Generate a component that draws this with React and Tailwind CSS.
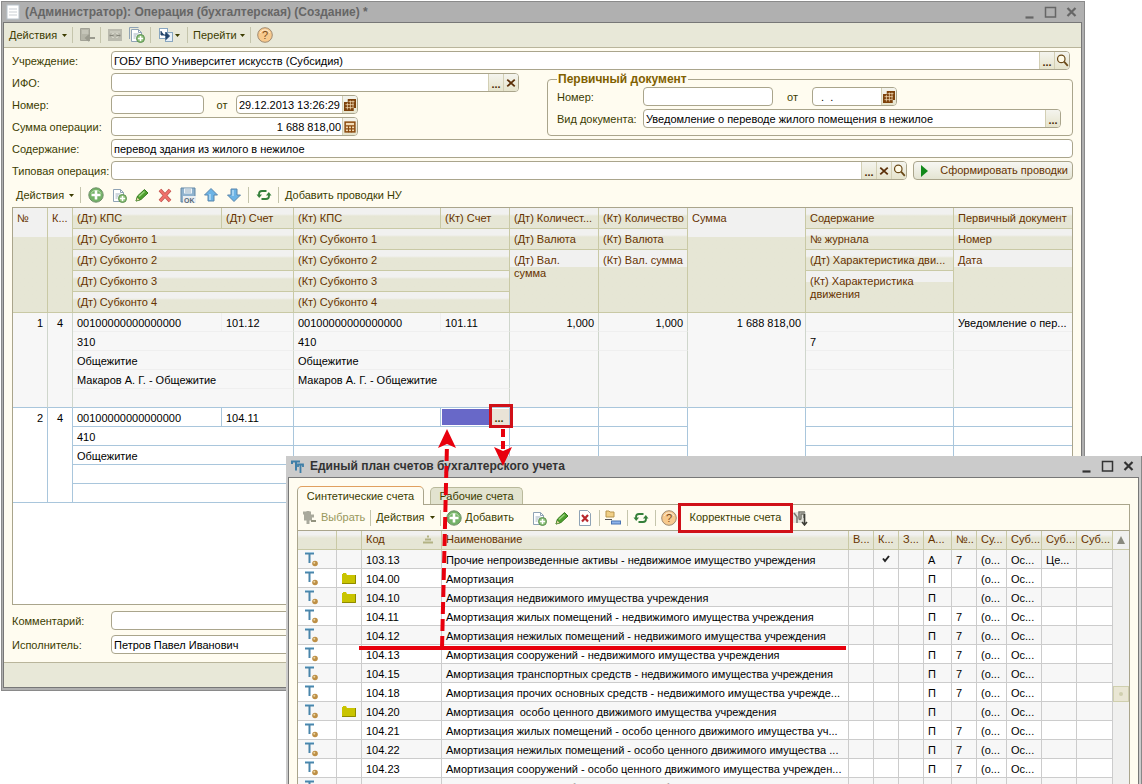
import React, { useState } from 'react';

const Svg = ({ size = 16, children, className = '' }) => (
  <svg width={size} height={size} viewBox="0 0 16 16" fill="none" className={`shrink-0 ${className}`} aria-hidden="true">
    {children}
  </svg>
);

const DocIcon = () => (
  <Svg>
    <rect x="2" y="1" width="12" height="14" fill="#fff" stroke="#b9c3cc" />
    <path d="M4 5h8M4 8h8M4 11h8" stroke="#c9ced3" />
  </Svg>
);

const DocPlusIcon = ({ copy }) => (
  <Svg>
    {copy && <path d="M.5 12V.5h9" stroke="#8fa3b5" />}
    <path d="M2.500 2.500h7l3 3v9h-10z" fill="#fff" stroke="#8fa3b5" />
    <path d="M9.500 2.500v3h3" stroke="#8fa3b5" />
    <path d="M4.500 7h5M4.500 9h3M4.500 11h2" stroke="#9fb0be" />
    <circle cx="11.500" cy="11.500" r="4" fill="#8fc27b" stroke="#5b8f50" />
    <path d="M11.500 9v5M9 11.500h5" stroke="#fff" strokeWidth="1.500" />
  </Svg>
);

const PlusIcon = () => (
  <Svg>
    <circle cx="8" cy="8" r="7.200" fill="#73b267" stroke="#6f8f6a" />
    <path d="M3 6.500a5.500 5.500 0 0 1 10 0" stroke="#b6dcaa" />
    <path d="M8 3.500v9M3.500 8h9" stroke="#fff" strokeWidth="2.600" />
  </Svg>
);

const PencilIcon = () => (
  <Svg>
    <path d="M2 14l1.500-5 7-6.500L14 6l-7 6.500z" fill="#4fa02f" stroke="#357a1f" />
    <path d="M5 9.500l5.500-5" stroke="#9bd47e" strokeWidth="1.500" />
    <path d="M2 14l1.300-3.800L6 13z" fill="#e9d9a6" stroke="#357a1f" strokeWidth=".5" />
  </Svg>
);

const DeleteIcon = () => (
  <Svg>
    <path d="M3 3l10 11M13 3L3 14" stroke="#b8544e" strokeWidth="3.600" />
    <path d="M3 3l10 11M13 3L3 14" stroke="#f0706a" strokeWidth="2.400" />
  </Svg>
);

const SaveIcon = () => (
  <Svg>
    <path d="M1 1h14v14H1z" fill="#8fb2ce" stroke="#6287a5" />
    <path d="M4 1.500h8v5H4z" fill="#eef4f8" />
    <path d="M5 3h6M5 5h6" stroke="#9db3c4" />
    <path d="M3 9h13v7H3z" fill="#e9eef2" />
    <text x="4" y="15.500" fontSize="7" fontWeight="700" fontFamily="Liberation Sans, sans-serif" fill="#5a6a77">
      OK
    </text>
  </Svg>
);

const ArrowIcon = ({ down }) => (
  <Svg>
    <path
      d={down ? 'M5 2h6v6h3.500L8 14.500 1.500 8H5z' : 'M5 14h6V8h3.500L8 1.500 1.500 8H5z'}
      fill="#6db4e6"
      stroke="#5a86ac"
    />
    <path d={down ? 'M7 3v6' : 'M7 13V7'} stroke="#b8def6" strokeWidth="1.500" />
  </Svg>
);

const RefreshIcon = () => (
  <Svg>
    <path d="M3 8.500V7a3 3 0 0 1 3-3h4.500" stroke="#35803b" strokeWidth="1.800" />
    <path d="M13 7.500V9a3 3 0 0 1-3 3H5.500" stroke="#35803b" strokeWidth="1.800" />
    <path d="M.5 7.500h5.500L3.200 11z" fill="#35803b" />
    <path d="M10 8.500h5.500L12.800 5z" fill="#35803b" />
  </Svg>
);

const HelpIcon = () => (
  <Svg>
    <circle cx="8" cy="8" r="7.300" fill="#f7c98d" stroke="#a08a70" />
    <path d="M3 6a5.500 5.500 0 0 1 10 0" stroke="#fde9cc" />
    <text x="8" y="12" fontSize="11" textAnchor="middle" fontFamily="Liberation Sans, sans-serif" fill="#7a4a1c">
      ?
    </text>
  </Svg>
);

const PostIcon = () => (
  <Svg>
    <path d="M1.500 1.500h9v12h-9z" fill="#b5b5a8" stroke="#a2a296" />
    <path d="M3 4h6M3 6h6" stroke="#d4d4c8" />
    <path d="M16 11H8M10.500 8L7 11l3.500 3" stroke="#9a9a8e" strokeWidth="2" />
  </Svg>
);

const BasedOnIcon = () => (
  <Svg>
    <rect x="1.500" y="1.500" width="8" height="10" fill="#fff" stroke="#88a6c0" />
    <rect x="7.500" y="5.500" width="7" height="9" fill="#e7f0f8" stroke="#88a6c0" />
    <path d="M3 4v4h5V5.500L11.500 9 8 12.500V10" fill="#22446b" stroke="#22446b" />
  </Svg>
);

const ReloadDisabledIcon = () => (
  <Svg>
    <rect x="1" y="2" width="14" height="12" fill="#babaae" />
    <path d="M3 5h10" stroke="#d6d6ca" />
    <path d="M6.500 6L4 8.500 6.500 11M9.500 6L12 8.500 9.500 11" stroke="#efefe3" />
    <path d="M2.500 8.500h4M9.500 8.500h4" stroke="#86867b" strokeWidth="1.500" />
  </Svg>
);

const CalendarIcon = () => (
  <Svg size={12}>
    <path d="M5 0h11v12h-3v4H0V4h5z" fill="#7d420c" />
    <path d="M2 7.500h11M2 11.500h11M6 3.500h8M4.500 5v9M8.500 2v12M12 2v9" stroke="#f3dcb7" />
  </Svg>
);

const CalcIcon = () => (
  <Svg size={12}>
    <rect x="1.500" y="1.500" width="13" height="13" fill="#f3dcb7" stroke="#8b4a0e" strokeWidth="2" />
    <path d="M2 6.500h12M2 10.500h12M6 6v9M10 6v9" stroke="#8b4a0e" strokeWidth="1.500" />
  </Svg>
);

const SearchIcon = () => (
  <Svg size={13}>
    <circle cx="6.500" cy="6" r="4.600" fill="#fffbe8" stroke="#6b4a18" strokeWidth="1.500" />
    <path d="M10 9.500l4.500 5" stroke="#6b4a18" strokeWidth="2.200" />
  </Svg>
);

const ClearIcon = () => (
  <Svg size={12}>
    <path d="M3 3.500l10 9M13 3.500l-10 9" stroke="#5b2f08" strokeWidth="2.400" />
  </Svg>
);

const DocXIcon = () => (
  <Svg>
    <path d="M2.500 .5h8l3 3v12h-11z" fill="#fff" stroke="#8fa3b5" />
    <path d="M5 5l6 6.500M11 5l-6 6.500" stroke="#b8282e" strokeWidth="2.200" />
  </Svg>
);

const HierarchyIcon = () => (
  <Svg>
    <path d="M1 1h3l1 1h4v5H1z" fill="#f0cf86" stroke="#b8954c" />
    <path d="M0 9.500h7" stroke="#555" />
    <rect x="6.500" y="11" width="9" height="3" fill="#8fb4ea" stroke="#4a74b4" />
  </Svg>
);

const FilterIcon = () => (
  <Svg>
    <path d="M0 2h13v11H0z" fill="#e3e3dc" />
    <path d="M1 3l3 4v6M12 2H6v6c0 2 2 2 2 0V4h3v4" stroke="#77776d" strokeWidth="1.500" />
    <path d="M11.500 4v10M9 12l2.500 3 2.500-3" stroke="#3d3d36" strokeWidth="1.500" />
  </Svg>
);

const PickIcon = () => (
  <Svg>
    <path d="M6 1v13M1 3h8M2 6h10M2 9h8" stroke="#a9a99c" strokeWidth="3" />
    <path d="M9 11h5" stroke="#93937f" strokeWidth="2" />
  </Svg>
);

const AccountIcon = () => (
  <Svg>
    <path d="M1 2.500h9M5.500 2.500v9.500" stroke="#4a86ab" strokeWidth="2" />
    <path d="M1 1.500h9" stroke="#9ec5dc" />
    <circle cx="11" cy="12.500" r="2.800" fill="#bd8f45" />
    <circle cx="10.300" cy="11.800" r="1" fill="#ecd7a5" />
  </Svg>
);

const ChartIcon = () => (
  <Svg>
    <path d="M2 5V2.500h8M6 2.500v9" stroke="#3f7fa8" strokeWidth="2" />
    <path d="M8 8V5.500h5V8M10.500 5.500V14" stroke="#3f7fa8" strokeWidth="1.800" />
  </Svg>
);

const FolderIcon = () => (
  <svg width="14" height="11" viewBox="0 0 14 11" aria-hidden="true" className="block">
    <path d="M0 1h1V0h3l1 2h9v9H0z" fill="#c9c400" />
    <path d="M13.500 2v8.500H0" stroke="#8e8a00" fill="none" />
  </svg>
);

const SortIcon = () => (
  <svg width="12" height="9" viewBox="0 0 12 9" aria-hidden="true" className="shrink-0">
    <path d="M5 1.500h2M3 4.500h6M1 7.500h10" stroke="#b2b283" strokeWidth="2" />
  </svg>
);

const CheckIcon = () => (
  <svg width="8" height="8" viewBox="0 0 8 8" aria-hidden="true" className="mx-auto block">
    <path d="M1 3.500l2 2.500 4-5" stroke="#222" strokeWidth="2" fill="none" />
  </svg>
);

const Caret = () => (
  <svg width="5" height="3" viewBox="0 0 5 3" aria-hidden="true" className="shrink-0">
    <path d="M0 0h5L2.500 3z" fill="#3c3c00" />
  </svg>
);

const Sep = () => <span className="h-4 w-px shrink-0 bg-[#c5c5ac]" />;

const Tool = ({ label, children }) => (
  <button type="button" aria-label={label} className="flex h-5 w-[17px] shrink-0 items-center justify-center">
    {children}
  </button>
);

const MenuButton = ({ children, className = '' }) => (
  <button type="button" className={`flex shrink-0 items-center justify-between whitespace-nowrap ${className}`}>
    {children}
    <Caret />
  </button>
);

const WindowButtons = () => (
  <div className="flex items-center gap-2">
    {[
      { id: 'Свернуть', d: 'M2 11.500h8' },
      { id: 'Развернуть', d: 'M1 1.500h10v9.500H1z' },
      { id: 'Закрыть', d: 'M2 2l8 8M10 2l-8 8' },
    ].map(({ id, d }) => (
      <button key={id} type="button" aria-label={id}>
        <svg width="13" height="13" viewBox="0 0 12 13" fill="none" stroke="currentColor" aria-hidden="true">
          <path d={d} strokeWidth={id === 'Развернуть' ? 1.5 : 2.2} />
        </svg>
      </button>
    ))}
  </div>
);

const actionIcons = {
  pick: { label: 'Выбрать', icon: <span className="pt-[3px] font-bold text-[#4a2c08]">...</span> },
  clear: { label: 'Очистить', icon: <ClearIcon /> },
  open: { label: 'Открыть', icon: <SearchIcon /> },
  calendar: { label: 'Календарь', icon: <CalendarIcon /> },
  calc: { label: 'Калькулятор', icon: <CalcIcon /> },
};

const Field = ({ id, label, value = '', actions = [], right, className = '' }) => {
  const [text, setText] = useState(value);

  return (
    <div className={`flex h-[19px] min-w-0 overflow-hidden rounded-[4px] border border-[#aaa58c] bg-white ${className}`}>
      <input
        id={id}
        type="text"
        aria-label={label}
        value={text}
        onChange={(e) => setText(e.target.value)}
        className={`min-w-0 flex-1 bg-transparent pl-[2px] pr-px pt-px text-black outline-none ${right ? 'text-right' : ''}`}
      />
      {actions.map((name) => (
        <button
          key={name}
          type="button"
          aria-label={actionIcons[name].label}
          className="flex w-[15px] shrink-0 items-center justify-center border-l border-[#d3cfb4] bg-linear-to-b from-[#f4f4ee] to-[#e6e4cc]"
        >
          {actionIcons[name].icon}
        </button>
      ))}
    </div>
  );
};

const Label = ({ htmlFor, children, className = 'w-[99px]' }) => (
  <label htmlFor={htmlFor} className={`shrink-0 whitespace-nowrap pt-px ${className}`}>
    {children}
  </label>
);

const Head = ({ children, tall, className = '', ...rest }) => (
  <th
    {...rest}
    className={`overflow-hidden border-b border-r border-[#c9c9a5] bg-linear-to-b from-[#f1f1f0] to-[#e6e6d5] px-1 pb-[3px] pt-1 text-left align-top font-normal text-[#663300] last:border-r-0 ${
      tall ? 'from-28% to-28%' : 'whitespace-nowrap from-30% to-40%'
    } ${className}`}
  >
    {children}
  </th>
);

// one accounting entry takes five sub-rows of the table
const Entry = ({ num, debit, credit, quantity, sum, journal, doc, editing }) => {
  const line = editing ? 'border-[#a9c6dc]' : 'border-b-[#efefef] border-r-[#cfd6cc]';
  const soft = editing ? 'border-[#a9c6dc]' : 'border-[#efefef]';
  const end = editing ? 'border-[#a9c6dc]' : 'border-b-[#a9c6dc] border-r-[#cfd6cc]';
  const base = 'h-[19px] overflow-hidden whitespace-nowrap border-b border-r px-1 pb-px pt-1 align-top';
  const bg = editing ? 'bg-white' : 'bg-[#f7f7f7]';

  return (
    <tbody className={`text-black ${bg}`}>
      <tr>
        <td rowSpan={5} className={`${base} ${end} text-right`}>{num}</td>
        <td rowSpan={5} className={`${base} ${end} text-center`}>4</td>
        <td className={`${base} ${soft}`}>{debit.kps}</td>
        <td className={`${base} ${line}`}>{debit.account}</td>
        <td className={`${base} ${soft}`}>{credit.kps}</td>
        {editing ? (
          <td className={`h-[19px] border-b border-r p-0 ${line}`}>
            <div className="flex h-[18px] items-center pl-px">
              <input aria-label="(Кт) Счет" type="text" className="h-4 min-w-0 flex-1 bg-[#6868c8] px-1 text-white outline-none" />
              <button type="button" aria-label="Выбрать счет" className="h-[17px] w-5 bg-[#e9e3d6] pt-[2px] font-bold text-[#3c3c00]">
                ...
              </button>
            </div>
          </td>
        ) : (
          <td className={`${base} ${line}`}>{credit.account}</td>
        )}
        <td className={`${base} ${line} text-right`}>{quantity}</td>
        <td className={`${base} ${line} text-right`}>{quantity}</td>
        <td rowSpan={5} className={`${base} ${end} text-right`}>{sum}</td>
        <td className={`${base} ${line}`} />
        <td className={`${base} ${line} border-r-0`}>{doc}</td>
      </tr>
      <tr>
        <td colSpan={2} className={`${base} ${line}`}>{debit.items[0]}</td>
        <td colSpan={2} className={`${base} ${line}`}>{credit.items[0]}</td>
        <td className={`${base} ${line}`} />
        <td className={`${base} ${line}`} />
        <td className={`${base} ${line}`}>{journal}</td>
        <td className={`${base} ${line} border-r-0`} />
      </tr>
      <tr>
        <td colSpan={2} className={`${base} ${line}`}>{debit.items[1]}</td>
        <td colSpan={2} className={`${base} ${line}`}>{credit.items[1]}</td>
        <td rowSpan={3} className={`${base} ${end}`} />
        <td rowSpan={3} className={`${base} ${end}`} />
        <td className={`${base} ${line}`} />
        <td rowSpan={3} className={`${base} ${end} border-r-0`} />
      </tr>
      <tr>
        <td colSpan={2} className={`${base} ${line}`}>{debit.items[2]}</td>
        <td colSpan={2} className={`${base} ${line}`}>{credit.items[2]}</td>
        <td rowSpan={2} className={`${base} ${end}`} />
      </tr>
      <tr>
        <td colSpan={2} className={`${base} ${end}`} />
        <td colSpan={2} className={`${base} ${end}`} />
      </tr>
    </tbody>
  );
};

const EntriesTable = () => (
  <table className="w-full table-fixed border-separate border-spacing-0">
    <colgroup>
      <col className="w-[35px]" />
      <col className="w-[25px]" />
      <col className="w-[149px]" />
      <col className="w-[72px]" />
      <col className="w-[147px]" />
      <col className="w-[69px]" />
      <col className="w-[89px]" />
      <col className="w-[89px]" />
      <col className="w-[118px]" />
      <col className="w-[148px]" />
      <col />
    </colgroup>
    <thead>
      <tr>
        <Head rowSpan={5} tall>№</Head>
        <Head rowSpan={5} tall>К...</Head>
        <Head>(Дт) КПС</Head>
        <Head>(Дт) Счет</Head>
        <Head>(Кт) КПС</Head>
        <Head>(Кт) Счет</Head>
        <Head>(Дт) Количест...</Head>
        <Head>(Кт) Количество</Head>
        <Head rowSpan={5} tall>Сумма</Head>
        <Head>Содержание</Head>
        <Head>Первичный документ</Head>
      </tr>
      <tr>
        <Head colSpan={2}>(Дт) Субконто 1</Head>
        <Head colSpan={2}>(Кт) Субконто 1</Head>
        <Head>(Дт) Валюта</Head>
        <Head>(Кт) Валюта</Head>
        <Head>№ журнала</Head>
        <Head>Номер</Head>
      </tr>
      <tr>
        <Head colSpan={2}>(Дт) Субконто 2</Head>
        <Head colSpan={2}>(Кт) Субконто 2</Head>
        <Head rowSpan={3} tall>
          (Дт) Вал.
          <br />
          сумма
        </Head>
        <Head rowSpan={3} tall className="whitespace-nowrap">(Кт) Вал. сумма</Head>
        <Head>(Дт) Характеристика дви...</Head>
        <Head rowSpan={3} tall>Дата</Head>
      </tr>
      <tr>
        <Head colSpan={2}>(Дт) Субконто 3</Head>
        <Head colSpan={2}>(Кт) Субконто 3</Head>
        <Head rowSpan={2} tall className="border-r!">(Кт) Характеристика движения</Head>
      </tr>
      <tr>
        <Head colSpan={2}>(Дт) Субконто 4</Head>
        <Head colSpan={2} className="border-r!">(Кт) Субконто 4</Head>
      </tr>
    </thead>
    <Entry
      num={1}
      debit={{ kps: '00100000000000000', account: '101.12', items: ['310', 'Общежитие', 'Макаров А. Г. - Общежитие'] }}
      credit={{ kps: '00100000000000000', account: '101.11', items: ['410', 'Общежитие', 'Макаров А. Г. - Общежитие'] }}
      quantity="1,000"
      sum="1 688 818,00"
      journal="7"
      doc="Уведомление о пер..."
    />
    <Entry
      num={2}
      debit={{ kps: '00100000000000000', account: '104.11', items: ['410', 'Общежитие'] }}
      credit={{ items: [] }}
      editing
    />
  </table>
);

const OperationWindow = () => (
  <section className="absolute left-px right-[57px] top-px border border-[#8a8a8a] bg-[#b0b0b0] pb-[2px] pl-px pr-[2px]">
    <header className="flex h-5 items-center justify-between pl-[2px] pr-1 text-[#666]">
      <div className="flex items-center gap-1">
        <DocIcon />
        <h1 className="text-[12px] font-bold">(Администратор): Операция (бухгалтерская) (Создание) *</h1>
      </div>
      <WindowButtons />
    </header>

    <div className="border border-[#777] bg-[#fffcf0]">
      <div className="flex h-[25px] items-center gap-[5px] border-b border-[#b9b59b] bg-[#e8e8d8] pl-[5px]">
        <MenuButton className="w-[58px]">Действия</MenuButton>
        <Sep />
        <Tool label="Провести"><PostIcon /></Tool>
        <Sep />
        <Tool label="Перечитать"><ReloadDisabledIcon /></Tool>
        <Tool label="Скопировать"><DocPlusIcon copy /></Tool>
        <Sep />
        <button type="button" aria-label="Ввести на основании" className="flex items-center gap-px px-[2px]">
          <BasedOnIcon />
          <Caret />
        </button>
        <Sep />
        <MenuButton className="w-[52px]">Перейти</MenuButton>
        <Sep />
        <Tool label="Справка"><HelpIcon /></Tool>
      </div>

      <div className="px-2 pb-2 pt-[3px]">
        <div className="flex flex-col gap-[3px]">
          <div className="flex items-center pr-[3px]">
            <Label htmlFor="org">Учреждение:</Label>
            <Field id="org" value="ГОБУ ВПО Университет искусств (Субсидия)" actions={['pick', 'open']} className="flex-1" />
          </div>

          <div className="flex gap-7">
            <div className="flex w-[507px] shrink-0 flex-col gap-[3px]">
              <div className="flex items-center">
                <Label htmlFor="ifo">ИФО:</Label>
                <Field id="ifo" actions={['pick', 'clear']} className="flex-1" />
              </div>
              <div className="flex items-center">
                <Label htmlFor="number">Номер:</Label>
                <Field id="number" className="w-[93px]" />
                <Label htmlFor="date" className="w-8 pl-1 text-center">от</Label>
                <Field id="date" value="29.12.2013 13:26:29" actions={['calendar']} className="w-[122px]" />
              </div>
              <div className="flex items-center">
                <Label htmlFor="total">Сумма операции:</Label>
                <Field id="total" value="1 688 818,00" actions={['calc']} right className="w-[247px]" />
              </div>
            </div>

            <fieldset className="min-w-0 flex-1 rounded-[4px] border border-[#aaa58c] pl-[9px] pr-[11px]">
              <legend className="px-px text-[12px] font-bold leading-[13px] text-[#806000]">Первичный документ</legend>
              <div className="flex flex-col gap-[3px] pt-px">
                <div className="flex items-center">
                  <Label htmlFor="doc-number" className="w-[86px]">Номер:</Label>
                  <Field id="doc-number" className="w-[130px]" />
                  <Label htmlFor="doc-date" className="w-[39px] text-center">от</Label>
                  <Field id="doc-date" value="  .  ." actions={['calendar']} className="w-[85px]" />
                </div>
                <div className="flex items-center">
                  <Label htmlFor="doc-kind" className="w-[86px]">Вид документа:</Label>
                  <Field
                    id="doc-kind"
                    value="Уведомление о переводе жилого помещения в нежилое"
                    actions={['pick']}
                    className="flex-1"
                  />
                </div>
              </div>
            </fieldset>
          </div>

          <div className="flex items-center">
            <Label htmlFor="content">Содержание:</Label>
            <Field id="content" value="перевод здания из жилого в нежилое" className="flex-1" />
          </div>

          <div className="flex items-center">
            <Label htmlFor="typical">Типовая операция:</Label>
            <Field id="typical" actions={['pick', 'clear', 'open']} className="flex-1" />
            <button
              type="button"
              className="ml-[6px] flex h-[19px] w-40 items-center justify-between rounded-[4px] border border-[#aaa58c] bg-linear-to-b from-[#f7f7f3] to-[#e4e4d2] pl-[6px] pr-1 text-[#663300]"
            >
              <svg width="9" height="12" viewBox="0 0 9 12" aria-hidden="true">
                <path d="M1 0l7 6-7 6z" fill="#12891b" />
              </svg>
              Сформировать проводки
            </button>
          </div>
        </div>

        <div className="flex h-[27px] items-center gap-[6px] pl-1 pt-[3px]">
          <MenuButton className="w-[58px]">Действия</MenuButton>
          <Sep />
          <Tool label="Добавить"><PlusIcon /></Tool>
          <Tool label="Добавить копированием"><DocPlusIcon /></Tool>
          <Tool label="Изменить"><PencilIcon /></Tool>
          <Tool label="Удалить"><DeleteIcon /></Tool>
          <Tool label="Закончить редактирование"><SaveIcon /></Tool>
          <Tool label="Переместить вверх"><ArrowIcon /></Tool>
          <Tool label="Переместить вниз"><ArrowIcon down /></Tool>
          <Sep />
          <Tool label="Обновить"><RefreshIcon /></Tool>
          <Sep />
          <button type="button">Добавить проводки НУ</button>
        </div>

        <div className="min-h-[398px] border border-[#aaa58c] bg-white">
          <EntriesTable />
        </div>

        <div className="mt-[6px] flex flex-col gap-[5px]">
          <div className="flex items-center">
            <Label htmlFor="comment">Комментарий:</Label>
            <Field id="comment" className="flex-1" />
          </div>
          <div className="flex items-center">
            <Label htmlFor="author">Исполнитель:</Label>
            <Field id="author" value="Петров Павел Иванович" className="flex-1" />
          </div>
        </div>
      </div>

      <footer className="h-[25px] border-t border-[#b9b59b] bg-[#e8e8d8]" />
    </div>
  </section>
);

const accounts = [
  { code: '103.13', name: 'Прочие непроизведенные активы - недвижимое имущество учреждения', checked: true, kind: 'А', journal: '7', sub: 'Це...' },
  { code: '104.00', name: 'Амортизация', folder: true },
  { code: '104.10', name: 'Амортизация недвижимого имущества учреждения', folder: true },
  { code: '104.11', name: 'Амортизация жилых помещений - недвижимого имущества учреждения', journal: '7' },
  { code: '104.12', name: 'Амортизация нежилых помещений - недвижимого имущества учреждения', journal: '7' },
  { code: '104.13', name: 'Амортизация сооружений - недвижимого имущества учреждения', journal: '7' },
  { code: '104.15', name: 'Амортизация транспортных средств - недвижимого имущества учреждения', journal: '7' },
  { code: '104.18', name: 'Амортизация прочих основных средств - недвижимого имущества учрежде...', journal: '7' },
  { code: '104.20', name: 'Амортизация  особо ценного движимого имущества учреждения', folder: true },
  { code: '104.21', name: 'Амортизация жилых помещений - особо ценного движимого имущества уч...', journal: '7' },
  { code: '104.22', name: 'Амортизация нежилых помещений - особо ценного движимого имущества ...', journal: '7' },
  { code: '104.23', name: 'Амортизация сооружений - особо ценного движимого имущества учрежден...', journal: '7' },
  { code: '104.24', name: 'Амортизация машин и оборудования - особо ценного движимого имущест...', journal: '7' },
];

const AccountsTable = () => {
  const th =
    'h-[19px] overflow-hidden whitespace-nowrap border-b border-r border-[#c9c9a5] bg-linear-to-b from-[#f1f1f0] from-20% to-[#e6e6d5] to-40% px-1 pb-[3px] pt-[2px] text-left align-top font-normal text-[#663300]';
  const td = 'h-[19px] overflow-hidden whitespace-pre border-b border-r border-[#cccccc] px-1 pb-px pt-1 align-top';

  return (
    <table className="w-full table-fixed border-separate border-spacing-0">
      <colgroup>
        <col className="w-[39px]" />
        <col className="w-[25px]" />
        <col className="w-[80px]" />
        <col />
        <col className="w-[25px]" />
        <col className="w-[25px]" />
        <col className="w-[25px]" />
        <col className="w-[28px]" />
        <col className="w-[25px]" />
        <col className="w-[30px]" />
        <col className="w-[35px]" />
        <col className="w-[35px]" />
        <col className="w-[36px]" />
      </colgroup>
      <thead>
        <tr>
          <th className={th} />
          <th className={th} />
          <th className={th}>
            <div className="flex items-center justify-between pr-[3px]">
              Код
              <SortIcon />
            </div>
          </th>
          {['Наименование', 'В...', 'К...', 'З...', 'А...', '№..', 'Су...', 'Суб...', 'Суб...', 'Суб...'].map((title, i) => (
            <th key={i} className={th}>{title}</th>
          ))}
        </tr>
      </thead>
      <tbody className="text-black">
        {accounts.map((acc) => (
          <tr key={acc.code} className="odd:bg-[#f7f7f7] even:bg-white">
            <td className="h-[19px] border-b border-r border-[#cccccc] py-0 pl-[6px]"><AccountIcon /></td>
            <td className="h-[19px] border-b border-r border-[#cccccc] py-0 pl-[5px]">{acc.folder && <FolderIcon />}</td>
            <td className={td}>{acc.code}</td>
            <td className={td}>{acc.name}</td>
            <td className={td} />
            <td className="h-[19px] border-b border-r border-[#cccccc] px-2 py-0">{acc.checked && <CheckIcon />}</td>
            <td className={td} />
            <td className={td}>{acc.kind || 'П'}</td>
            <td className={td}>{acc.journal}</td>
            <td className={td}>(о...</td>
            <td className={td}>Ос...</td>
            <td className={td}>{acc.sub}</td>
            <td className={td} />
          </tr>
        ))}
      </tbody>
    </table>
  );
};

const AccountsWindow = () => (
  <section className="absolute left-[286px] right-0 top-[456px] border-r border-[#888] bg-[#cbcbcb] pl-[2px] pr-[2px]">
    <header className="flex h-[21px] items-center justify-between pl-[2px] pr-1 text-[#333]">
      <div className="flex items-center gap-1">
        <ChartIcon />
        <h2 className="text-[12px] font-bold">Единый план счетов бухгалтерского учета</h2>
      </div>
      <WindowButtons />
    </header>

    <div className="border border-[#777] bg-[#fffcf0] px-2 pt-2">
      <div role="tablist" className="flex items-end gap-[6px]">
        <button
          type="button"
          role="tab"
          aria-selected="true"
          className="-mb-px h-[19px] w-[127px] rounded-t-[5px] border border-b-0 border-[#aaa58c] border-t-[#e0a060] bg-[#fffcf0] leading-[17px]"
        >
          Синтетические счета
        </button>
        <button
          type="button"
          role="tab"
          aria-selected="false"
          className="h-[17px] w-[93px] rounded-t-[5px] border border-b-0 border-[#b9b99b] bg-[#e2e3cf] leading-[16px]"
        >
          Рабочие счета
        </button>
      </div>

      <div className="border border-[#aaa58c]">
        <div className="flex h-[26px] items-center gap-[5px] border-b border-[#aaa58c] pl-1">
          <button type="button" disabled className="flex items-center gap-[3px] text-[#98985c]">
            <PickIcon />
            Выбрать
          </button>
          <Sep />
          <MenuButton className="w-[59px]">Действия</MenuButton>
          <Sep />
          <button type="button" className="flex items-center gap-[3px]">
            <PlusIcon />
            Добавить
          </button>
          <div className="flex items-center gap-[6px] pl-3">
            <Tool label="Добавить копированием"><DocPlusIcon /></Tool>
            <Tool label="Изменить"><PencilIcon /></Tool>
            <Tool label="Пометить на удаление"><DocXIcon /></Tool>
          </div>
          <Sep />
          <Tool label="Иерархия"><HierarchyIcon /></Tool>
          <Sep />
          <Tool label="Обновить"><RefreshIcon /></Tool>
          <Sep />
          <Tool label="Справка"><HelpIcon /></Tool>
          <button type="button" className="w-[105px] text-center">Корректные счета</button>
          <Tool label="Настройка отбора"><FilterIcon /></Tool>
        </div>

        <div className="flex">
          <div className="min-w-0 flex-1">
            <AccountsTable />
          </div>
          <div className="flex w-4 shrink-0 flex-col bg-[#f0f0ef]">
            <button type="button" aria-label="Прокрутить вверх" className="flex h-[19px] items-center justify-center border-b border-[#c9c9a5]">
              <svg width="8" height="8" viewBox="0 0 8 8" aria-hidden="true">
                <path d="M4 0l4 8H0z" fill="#8a8a80" />
              </svg>
            </button>
            <div className="mt-[136px] flex h-4 items-center justify-center border border-[#cfcfae] bg-[#e9e6d4]">
              <span className="size-1 rounded-full bg-[#cfcfae]" />
            </div>
          </div>
        </div>
      </div>
    </div>
  </section>
);

// red marks that lead from the empty account cell to the account to pick
const Annotations = () => (
  <svg className="pointer-events-none absolute left-0 top-0 h-full w-full" aria-hidden="true">
    <g fill="none" stroke="#d01018">
      <rect x="490.500" y="405.500" width="21" height="21" strokeWidth="3" />
      <rect x="679.500" y="504.500" width="112" height="27" strokeWidth="3" />
    </g>
    <g fill="none" stroke="#e8000d" strokeWidth="4">
      <path d="M503 429v22" strokeDasharray="8 4" />
      <path d="M442 648L447 444" strokeDasharray="12 5" />
      <path d="M359 648h487" />
    </g>
    <path d="M447 429l9 19-9-4-9 4z" fill="#e8000d" />
    <path d="M503 466l9-19-9 4-9-4z" fill="#e8000d" />
  </svg>
);

const App = () => {
  return (
    <main className="relative h-screen overflow-hidden bg-white font-['Liberation_Sans',Arial,sans-serif] text-[11px] leading-[13px] text-[#3c3c00]">
      <OperationWindow />
      <AccountsWindow />
      <Annotations />
    </main>
  );
};

export default App;
